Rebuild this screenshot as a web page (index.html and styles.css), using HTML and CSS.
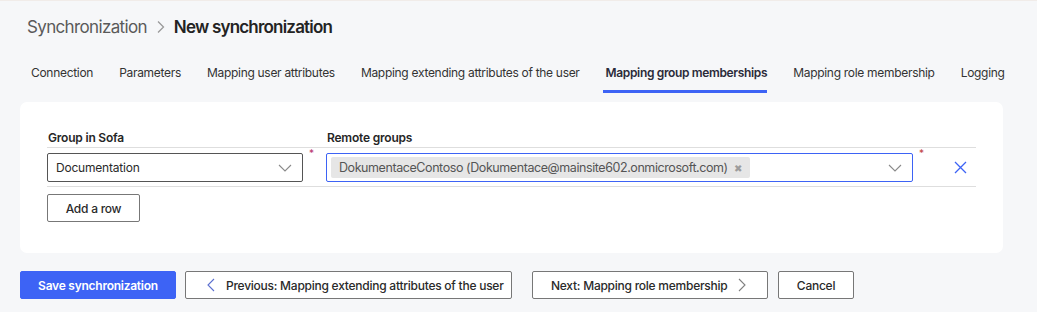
FILE: index.html
```html
<!DOCTYPE html>
<html>
<head>
<meta charset="utf-8">
<link rel="stylesheet" href="styles.css">
</head>
<body>
<div class="page">
  <div class="breadcrumb">
    <span class="crumb">Synchronization</span>
    <svg class="crumb-sep" width="10" height="14" viewBox="0 0 10 14"><path d="M2 1.5 L7.5 7 L2 12.5" fill="none" stroke="#9a9a9a" stroke-width="1.3"/></svg>
    <span class="crumb-current">New synchronization</span>
  </div>
  <nav class="tabs">
    <span class="tab">Connection</span>
    <span class="tab">Parameters</span>
    <span class="tab">Mapping user attributes</span>
    <span class="tab">Mapping extending attributes of the user</span>
    <span class="tab active">Mapping group memberships</span>
    <span class="tab">Mapping role membership</span>
    <span class="tab">Logging</span>
  </nav>
  <section class="card">
    <div class="grid head">
      <div class="th">Group in Sofa</div>
      <div></div>
      <div class="th">Remote groups</div>
      <div></div>
    </div>
    <div class="grid row">
      <div class="select">
        <span class="select-text">Documentation</span>
        <svg class="chev" width="14" height="8" viewBox="0 0 14 8"><path d="M1 1 L7 7 L13 1" fill="none" stroke="#8a8a8a" stroke-width="1.1"/></svg>
      </div>
      <div class="req">*</div>
      <div class="select multi">
        <span class="tag">DokumentaceContoso (Dokumentace@mainsite602.onmicrosoft.com)<span class="tag-x">✖</span></span>
        <svg class="chev" width="14" height="8" viewBox="0 0 14 8"><path d="M1 1 L7 7 L13 1" fill="none" stroke="#8a8a8a" stroke-width="1.1"/></svg>
      </div>
      <div class="req right">*</div>
      <div class="del">
        <svg width="13" height="13" viewBox="0 0 13 13"><path d="M1 1 L12 12 M12 1 L1 12" fill="none" stroke="#3d63f5" stroke-width="1.3"/></svg>
      </div>
    </div>
    <button class="btn add">Add a row</button>
  </section>
  <div class="actions">
    <button class="btn primary">Save synchronization</button>
    <button class="btn prev">
      <svg width="8" height="14" viewBox="0 0 8 14"><path d="M7 1 L1 7 L7 13" fill="none" stroke="#5b6fcf" stroke-width="1.1"/></svg>
      <span>Previous: Mapping extending attributes of the user</span>
    </button>
    <button class="btn next">
      <span>Next: Mapping role membership</span>
      <svg width="8" height="14" viewBox="0 0 8 14"><path d="M1 1 L7 7 L1 13" fill="none" stroke="#808080" stroke-width="1.1"/></svg>
    </button>
    <button class="btn cancel">Cancel</button>
  </div>
</div>
</body>
</html>
```

FILE: styles.css
```css
* { box-sizing: border-box; }
html, body { margin: 0; padding: 0; }
body {
  background: #f6f7f9;
  border-top: 1px solid #f1ece9;
  font-family: Inter, "Liberation Sans", sans-serif;
  color: #2a2a2a;
  width: 1037px;
  height: 312px;
  overflow: hidden;
}
.page { padding: 0 20px; }
.breadcrumb {
  display: flex;
  align-items: center;
  height: 52px;
  padding-left: 7px;
  padding-bottom: 1px;
  font-size: 17px;
}
.crumb { color: #5a5a5a; font-weight: 400; letter-spacing: -0.65px; }
.crumb-sep { margin: 0 8px 0 9px; }
.crumb-current { color: #232323; font-weight: 600; letter-spacing: -0.8px; }
.tabs {
  display: flex;
  gap: 26px;
  padding-left: 11px;
  height: 40px;
  font-size: 12px;
  letter-spacing: -0.3px;
  color: #333;
}
.tab {
  position: relative;
  padding-top: 12px;
  height: 40px;
  white-space: nowrap;
}
.tab.active { font-weight: 600; color: #2b2b3a; letter-spacing: -0.35px; }
.tab.active::after {
  content: "";
  position: absolute;
  left: -3px;
  right: 0;
  bottom: 0;
  height: 3px;
  background: #3d63f5;
}
.card {
  margin-top: 9px;
  width: 983px;
  height: 151px;
  background: #fff;
  border-radius: 7px;
  padding: 27px 27px 0 27px;
}
.grid {
  display: grid;
  grid-template-columns: 256px 23px 587px 63px;
}
.head {
  font-size: 12px;
  letter-spacing: -0.2px;
  font-weight: 600;
  color: #262626;
  height: 19px;
  border-bottom: 1px solid #dedede;
}
.th { padding-top: 1px; padding-left: 1px; }
.row {
  padding: 5px 0 4px;
  border-bottom: 1px solid #dedede;
  align-items: start;
}
.select {
  height: 29px;
  border: 1px solid #555;
  border-radius: 2px;
  display: flex;
  align-items: center;
  padding: 0 10px 0 8px;
  font-size: 12px;
  letter-spacing: -0.2px;
  color: #2a2a2a;
}
.select-text { flex: 1; }
.chev { margin-left: auto; }
.multi {
  border-color: #3d63f5;
  padding-left: 4px;
}
.tag {
  background: #e6e6e6;
  border-radius: 2px;
  height: 21px;
  display: flex;
  align-items: center;
  padding: 0 9px 0 8px;
  color: #555;
  font-size: 12.5px;
  letter-spacing: -0.42px;
}
.tag-x { font-size: 10px; color: #9c9c9c; margin-left: 6px; }
.req {
  font-size: 10px;
  color: #b8326a;
  padding-left: 6px;
  line-height: 1;
  margin-top: -5px;
}
.req.right { color: #c04040; grid-column: 4; grid-row: 1; }
.del {
  grid-column: 4;
  grid-row: 1;
  height: 29px;
  display: flex;
  align-items: center;
  padding-left: 41px;
}
.btn {
  font-family: Inter, "Liberation Sans", sans-serif;
  font-size: 12px;
  letter-spacing: -0.25px;
  background: #fff;
  border: 1px solid #777;
  border-radius: 2px;
  color: #2a2a2a;
  height: 28px;
  padding: 0;
  display: inline-flex;
  align-items: center;
  justify-content: center;
  gap: 11px;
  font-weight: 500;
  white-space: nowrap;
}
.add { margin-top: 7px; width: 93px; }
.actions {
  display: flex;
  gap: 9px;
  margin-top: 18px;
}
.primary {
  width: 156px;
  background: #3d63f5;
  border-color: #3d63f5;
  color: #fff;
  font-weight: 600;
}
.prev { width: 327px; justify-content: flex-start; padding-left: 21px; }
.next { width: 236px; margin-left: 11px; justify-content: flex-start; padding-left: 18px; }
.cancel { width: 76px; margin-left: 1px; }
```
